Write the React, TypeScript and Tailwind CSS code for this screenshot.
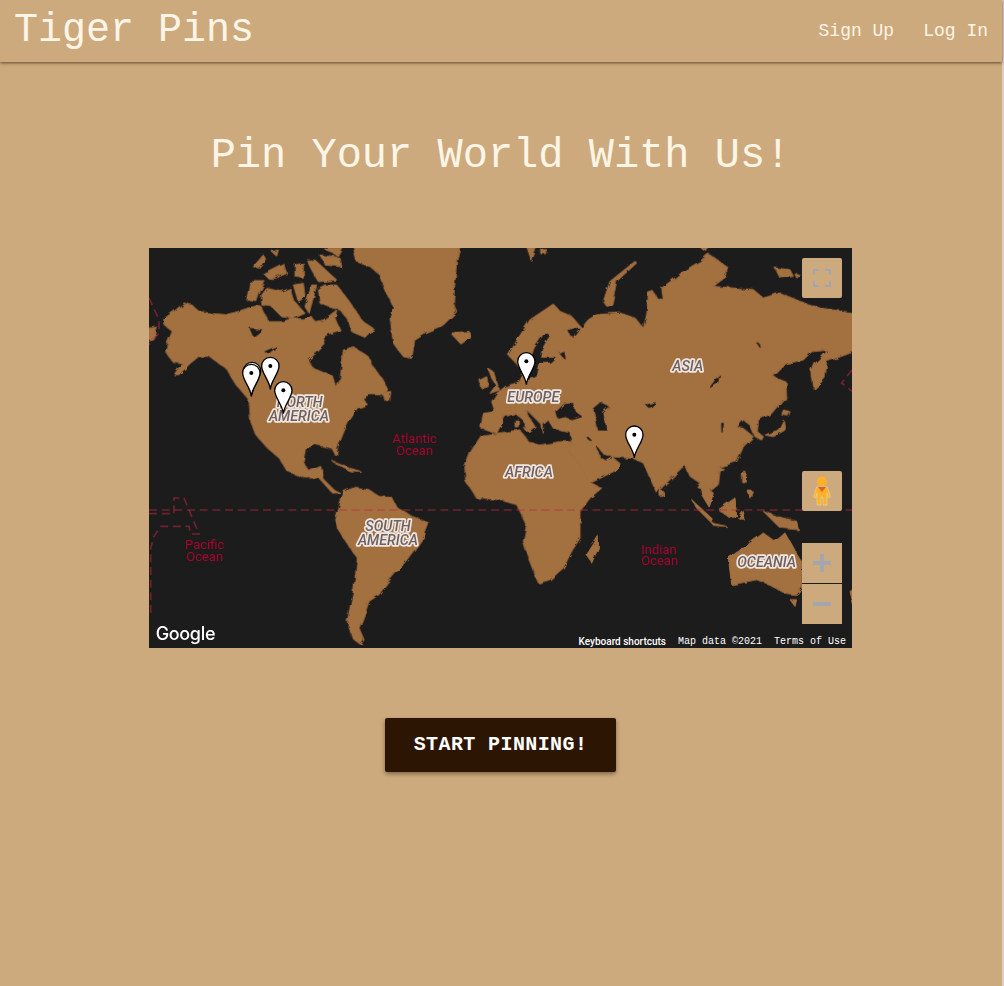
const land = "#a36f40"
const dark = "#1c1c1c"

function Pin({ x, y }: { x: number; y: number }) {
  // x,y is the tip of the pin, in zoomed map units
  return (
    <g transform={`translate(${x} ${y})`}>
      <path
        d="M0 0 C-2 -26 -26 -48 -26 -70 A26 26 0 1 1 26 -70 C26 -48 2 -26 0 0 Z"
        fill="#fff"
        stroke="#000"
        strokeWidth="4"
      />
      <circle cx="0" cy="-70" r="6" fill="#000" />
    </g>
  )
}

function Poly({ d, fill = land }: { d: string; fill?: string }) {
  return <polygon points={d} fill={fill} stroke={fill} strokeWidth="3" strokeLinejoin="round" />
}

function Label({ x, y, children }: { x: number; y: number; children: string }) {
  return (
    <text
      x={x}
      y={y}
      textAnchor="middle"
      fontFamily="Roboto, sans-serif"
      fontStyle="italic"
      fontWeight="500"
      fontSize="43"
      fill="#6e6060"
      stroke="#efe6df"
      strokeWidth="10"
      strokeLinejoin="round"
      paintOrder="stroke"
    >
      {children}
    </text>
  )
}

function Ocean({ x, y, children }: { x: number; y: number; children: string }) {
  return (
    <text x={x} y={y} textAnchor="middle" fontFamily="Roboto, sans-serif" fontSize="39" fill="#a8042f">
      {children}
    </text>
  )
}

function WorldMap() {
  return (
    <svg viewBox="0 0 2109 1200" className="w-full h-full block">
      <defs>
        <filter id="coast" x="0" y="0" width="100%" height="100%">
          <feTurbulence type="fractalNoise" baseFrequency="0.035" numOctaves="3" seed="4" />
          <feDisplacementMap in="SourceGraphic" scale="14" />
          <feGaussianBlur stdDeviation="1.2" />
        </filter>
      </defs>
      <rect width="2109" height="1200" fill={dark} />

      <g filter="url(#coast)">
        {/* north america */}
        <Poly d="45,212 75,190 105,165 130,172 150,190 190,197 230,200 262,192 280,186 303,178 333,172 358,221 398,221 433,211 463,216 488,206 498,221 523,216 543,201 563,186 558,211 573,246 543,256 523,266 528,291 478,336 493,361 553,386 563,420 573,396 580,341 583,306 613,296 658,326 668,351 703,396 715,428 695,440 660,440 640,450 655,470 625,480 600,520 585,550 565,600 562,625 548,600 500,590 470,600 462,640 480,670 515,655 525,695 555,725 575,735 550,735 510,690 470,690 415,670 390,630 355,600 320,560 305,520 300,455 262,412 230,360 180,325 150,325 125,345 90,380 75,380 100,345 70,340 50,310 55,285 70,250 45,230" />
        <Poly d="700,435 725,430 722,460 705,455" />
        <Poly fill={dark} d="303,241 338,246 313,264" />
        <Poly fill={dark} d="348,311 383,296 358,316" />
        <g transform="translate(273 6)">
          <Poly d="235,115 255,105 290,105 310,130 345,180 370,215 400,235 375,262 335,245 325,210 300,180 265,170 240,160" />
          <Poly d="65,135 80,115 125,125 150,115 160,150 195,190 160,205 125,200 95,170 65,165" />
          <Poly d="20,150 30,95 75,95 60,125 50,155" />
          <Poly d="160,105 190,100 195,140 175,155" />
          <Poly d="215,105 230,105 207,190 195,170" />
          <Poly d="40,50 70,15 80,30 60,55" />
          <Poly d="70,70 130,40 140,70 105,85 85,85" />
          <Poly d="95,5 115,0 110,18" />
          <Poly d="165,45 190,40 190,85 165,80" />
          <Poly d="200,30 225,30 290,90 235,95 215,60" />
          <Poly d="240,15 300,25 305,50 255,45" />
          <Poly d="250,-6 310,-6 295,20" />
          {/* greenland */}
          <Poly d="340,-10 660,-10 650,30 645,90 640,160 650,185 610,225 550,250 525,265 515,325 490,320 460,280 450,200 460,170 440,130 420,75 390,50 350,35" />
        </g>
        <Poly d="905,255 960,250 965,270 935,288" />
        <Poly d="-5,240 25,238 15,275 -5,280" />

        {/* eurasia */}
        <Poly d="995,541 1003,496 1038,491 1028,461 1043,436 1068,416 1110,402 1125,375 1100,345 1078,322 1108,270 1143,215 1173,195 1213,168 1233,190 1268,205 1298,240 1318,215 1343,200 1413,195 1458,210 1483,240 1493,200 1498,135 1513,130 1523,150 1543,155 1538,120 1578,90 1603,70 1653,40 1678,18 1733,55 1733,85 1693,115 1753,120 1813,125 1843,150 1893,135 1953,160 2013,180 2115,195 2115,311 2033,341 2028,391 1995,424 1988,371 1998,346 2038,306 1988,311 1963,336 1913,346 1873,386 1908,401 1905,451 1868,496 1828,516 1825,551 1843,566 1838,576 1818,566 1803,531 1783,516 1763,538 1783,541 1813,566 1783,596 1763,641 1713,656 1713,670 1708,710 1683,730 1643,715 1653,705 1623,685 1608,650 1523,735 1483,645 1453,631 1388,626 1413,646 1403,666 1313,711 1278,656 1258,611 1258,605 1268,581 1263,551 1213,541 1198,516 1183,530 1183,556 1178,531 1163,516 1128,481 1133,496 1158,536 1138,551 1123,516 1098,496 1068,506 1058,526 1043,556 1003,541" />
        <g transform="translate(1053 0)">
          <Poly fill={dark} d="105,300 135,255 148,262 125,300 118,328 165,328 150,342 118,345 108,385 80,395 90,360 95,330" />
          <Poly fill={dark} d="207,250 240,243 222,268 212,262" />
          <Poly fill={dark} d="178,315 190,310 192,330" />
          <Poly d="310,160 330,100 405,40 410,45 350,100 335,170 320,175" />
          <Poly d="80,-5 110,-5 95,40" />
          <Poly d="125,5 140,5 140,20 125,20" />
          <Poly d="600,-5 620,-5 610,8" />
          <Poly d="825,60 870,65 880,85 840,90" />
          <Poly d="885,78 900,82 890,90" />
        </g>
        <g transform="translate(933 366)">
          <Poly fill={dark} d="290,125 310,105 340,100 345,125 365,140 340,148 315,140 295,145" />
          <Poly fill={dark} d="402,120 425,100 445,110 425,125 430,150 442,180 415,180 410,150" />
          <Poly fill={dark} d="410,230 430,255 455,262 440,270 420,260" />
          <Poly fill={dark} d="380,198 395,212 385,208" />
          <Poly fill={dark} d="565,108 585,100 570,112" />
          <Poly d="60,30 80,20 85,50 65,55" />
          <Poly d="85,-4 100,5 118,60 90,70 108,45 95,25" />
          <Poly d="190,172 210,175 200,185" />
          <Poly d="165,150 175,150 175,170 165,170" />
        </g>
        <g transform="translate(1473 276)">
          <Poly fill={dark} d="210,142 238,105 232,130" />
          <Poly fill={dark} d="20,195 45,188 25,202" />
          <Poly fill={dark} d="245,250 250,250 246,277" />
          <Poly fill={dark} d="350,8 358,12 360,22" />
          {/* sakhalin, hokkaido, japan */}
          <Poly d="430,125 438,125 440,180 432,182" />
          <Poly d="430,210 450,215 445,228 425,225" />
          <Poly d="375,285 415,270 430,240 435,270 400,290" />
          <Poly d="305,395 315,395 312,425 305,425" />
          <Poly d="325,455 340,455 335,470" />
          <Poly d="235,385 250,385 240,395" />
        </g>

        {/* africa */}
        <Poly d="998,561 968,606 948,656 950,700 983,751 1000,750 1050,755 1103,770 1133,830 1123,880 1138,930 1168,1005 1203,995 1243,960 1268,910 1293,870 1293,790 1323,750 1358,720 1315,700 1288,645 1258,611 1268,581 1233,581 1173,591 1143,586 1113,546 1043,556" />
        <Poly d="1260,1000" />

        {/* south america and the caribbean */}
        <g transform="translate(0 600)">
          <Poly d="550,40 600,60 635,70 600,68" />
          <Poly d="560,215 570,180 585,130 620,118 660,125 690,145 730,150 745,180 790,205 840,225 825,265 800,300 770,340 740,375 710,410 690,440 660,460 650,490 630,540 645,575 635,590 610,570 595,520 605,470 615,420 625,330 590,280 565,240" />
        </g>

        {/* islands of the south east */}
        <g transform="translate(1053 600)">
          <Poly d="260,320 295,265 295,300 275,345" />
          <Poly d="480,130 490,130 490,145 480,145" />
          <Poly d="600,105 640,135 628,178 605,140" />
          <Poly d="575,155 640,215 635,225 590,180" />
          <Poly d="655,185 705,150 710,205 690,210" />
          <Poly d="635,225 680,235 640,232" />
          <Poly d="715,210 730,190 735,215" />
          <Poly d="790,190 830,205 890,220 895,245 840,240" />
          <Poly d="725,75 735,70 730,100" />
          <Poly d="745,130 755,130 750,150" />
          <Poly d="685,330 730,300 790,255 825,280 855,255 880,300 905,340 905,420 890,440 850,435 810,410 770,395 695,410" />
          <Poly d="870,455 890,455 885,475" />
          <Poly d="1050,430 1060,425 1060,470" />
        </g>
      </g>

      {/* date line and equator */}
      <g fill="none" stroke="#c22a45" strokeOpacity="0.5" strokeWidth="5" strokeDasharray="24 14">
        <path d="M0 786 H2109" />
        <path d="M0 797 H75 V750 H105 L150 858 H125 L120 835 H35 L15 865 L5 900 V1095" />
        <path d="M0 150 L30 215 V255 L0 290" />
        <path d="M2109 365 L2078 405 L2109 430" />
      </g>

      <Label x={452} y={478}>NORTH</Label>
      <Label x={450} y={520}>AMERICA</Label>
      <Label x={1153} y={461}>EUROPE</Label>
      <Label x={1616} y={368}>ASIA</Label>
      <Label x={1140} y={686}>AFRICA</Label>
      <Label x={717} y={848}>SOUTH</Label>
      <Label x={717} y={891}>AMERICA</Label>
      <Label x={1853} y={958}>OCEANIA</Label>

      <Ocean x={797} y={586}>Atlantic</Ocean>
      <Ocean x={797} y={620}>Ocean</Ocean>
      <Ocean x={167} y={904}>Pacific</Ocean>
      <Ocean x={167} y={938}>Ocean</Ocean>
      <Ocean x={1530} y={917}>Indian</Ocean>
      <Ocean x={1532} y={951}>Ocean</Ocean>

      <Pin x={309} y={439} />
      <Pin x={307} y={445} />
      <Pin x={364} y={424} />
      <Pin x={403} y={497} />
      <Pin x={1132} y={410} />
      <Pin x={1456} y={630} />

      <text x="20" y="1176" fontFamily="Inter, sans-serif" fontWeight="500" fontSize="54" letterSpacing="-1" fill="#fff">
        Google
      </text>
    </svg>
  )
}

function MapButton({ children, className = "" }: { children: React.ReactNode; className?: string }) {
  return <div className={`w-10 h-10 bg-[#cdaa7d] flex items-center justify-center ${className}`}>{children}</div>
}

export default function App() {
  return (
    <div className="min-h-screen bg-[#cdaa7d] border-r-2 border-[#d8d1c6] font-['Liberation_Mono',monospace] text-[#fdf5e6]">
      <header className="h-[62px] flex items-center justify-between pl-[14px] pr-[14px] shadow-[0_1px_3px_rgba(60,40,20,0.75)]">
        <span className="text-[40px] leading-none">Tiger Pins</span>
        <nav className="flex gap-[29px] text-[18px]">
          <span>Sign Up</span>
          <span>Log In</span>
        </nav>
      </header>

      <main className="flex flex-col items-center pr-px">
        <h1 className="mt-[70px] text-[42px] leading-[48px]">Pin Your World With Us!</h1>

        <div className="relative w-[703px] h-[400px] mt-[68px]">
          <WorldMap />

          <div className="absolute top-[10px] right-[10px]">
            <MapButton className="rounded-[2px]">
              <svg width="18" height="18" viewBox="0 0 18 18" fill="none" stroke="#a3a6ad" strokeWidth="2">
                <path d="M1 6V1H6M12 1H17V6M17 12V17H12M6 17H1V12" />
              </svg>
            </MapButton>
          </div>

          <div className="absolute top-[223px] right-[10px] flex flex-col">
            <MapButton className="rounded-[2px]">
              <svg width="18" height="30" viewBox="0 0 18 30">
                <circle cx="9" cy="5.5" r="5" fill="#fdb12a" />
                <path d="M3.500 11H14.500L17.500 21L15.500 22L14 17V29H10V21H8V29H4V17L2.500 22L0.500 21Z" fill="#fdb12a" stroke="#f3dca0" strokeWidth="0.5" />
                <path d="M5 11H13L9 16Z" fill="#d9622b" />
              </svg>
            </MapButton>
            <div className="mt-[32px] flex flex-col gap-px">
              <MapButton>
                <svg width="18" height="18" viewBox="0 0 18 18" fill="#a3a6ad">
                  <path d="M7 0H11V7H18V11H11V18H7V11H0V7H7Z" />
                </svg>
              </MapButton>
              <MapButton>
                <svg width="18" height="4" viewBox="0 0 18 4" fill="#a3a6ad">
                  <rect width="18" height="4" />
                </svg>
              </MapButton>
            </div>
          </div>

          <div className="absolute bottom-0 right-0 h-[14px] flex items-center text-[10px] text-white bg-[#1c1c1c]">
            <span className="font-['Roboto',sans-serif] font-medium pl-[5px] pr-[12px]">Keyboard shortcuts</span>
            <span className="pr-[12px]">Map data ©2021</span>
            <span className="pr-[6px]">Terms of Use</span>
          </div>
        </div>

        <button className="mt-[70px] w-[231px] h-[54px] rounded-[2px] bg-[#2c1503] text-white font-bold text-[20px] tracking-[0.4px] shadow-[0_2px_4px_rgba(0,0,0,0.4)]">
          START PINNING!
        </button>
      </main>
    </div>
  )
}
